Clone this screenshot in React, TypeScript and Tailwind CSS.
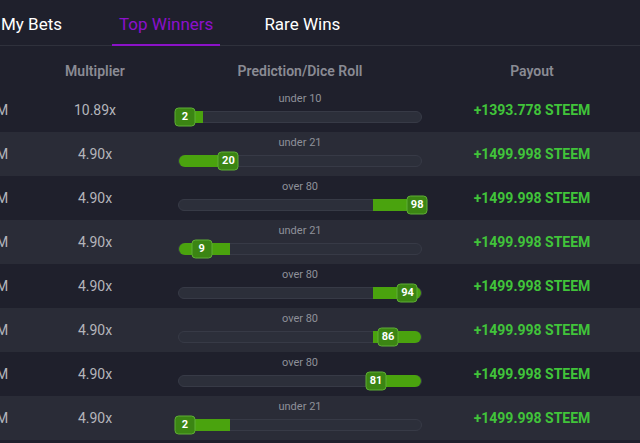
type Bet = {
  multiplier: string;
  mode: "under" | "over";
  target: number;
  roll: number;
  payout: string;
};

const bets: Bet[] = [
  { multiplier: "10.89x", mode: "under", target: 10, roll: 2, payout: "+1393.778 STEEM" },
  { multiplier: "4.90x", mode: "under", target: 21, roll: 20, payout: "+1499.998 STEEM" },
  { multiplier: "4.90x", mode: "over", target: 80, roll: 98, payout: "+1499.998 STEEM" },
  { multiplier: "4.90x", mode: "under", target: 21, roll: 9, payout: "+1499.998 STEEM" },
  { multiplier: "4.90x", mode: "over", target: 80, roll: 94, payout: "+1499.998 STEEM" },
  { multiplier: "4.90x", mode: "over", target: 80, roll: 86, payout: "+1499.998 STEEM" },
  { multiplier: "4.90x", mode: "over", target: 80, roll: 81, payout: "+1499.998 STEEM" },
  { multiplier: "4.90x", mode: "under", target: 21, roll: 2, payout: "+1499.998 STEEM" },
];

const RollBar = ({ bet }: { bet: Bet }) => {
  const fill =
    bet.mode === "under"
      ? { left: 0, width: `${bet.target}%` }
      : { left: `${bet.target}%`, right: 0 };

  return (
    <div className="relative h-[12px] rounded-full border border-[#373a46] bg-[#2c2f3a]">
      <div
        className={`absolute -top-px -bottom-px bg-[#4aa30e] ${
          bet.mode === "under" ? "-left-px rounded-l-full" : "-right-px rounded-r-full"
        }`}
        style={fill}
      />
      <div
        className="absolute top-1/2 flex h-[19px] w-[21px] -translate-x-1/2 -translate-y-1/2 items-center justify-center rounded-[4px] border border-[#5fae36] bg-[#3b8513] text-[11px] font-bold text-white"
        style={{ left: `calc(${bet.roll}% + 1px)` }}
      >
        {bet.roll}
      </div>
    </div>
  );
};

export default function App() {
  return (
    <div className="min-h-screen overflow-hidden bg-[#1f202c] font-['Roboto',sans-serif]">
      <div className="flex h-[46px] items-stretch border-b border-[#2f313c] text-[17px] text-white">
        <div className="-mb-px flex items-center pl-[1px] pt-[4px]">My Bets</div>
        <div className="-mb-px ml-[50px] flex items-center border-b-2 border-[#8b12c8] px-[7px] pt-[6px] text-[#8c10cc]">
          Top Winners
        </div>
        <div className="-mb-px ml-[44px] flex items-center pt-[4px]">Rare Wins</div>
      </div>

      <div className="grid h-[42px] grid-cols-[20px_150px_260px_204px] pt-[17px] text-[14px] font-semibold leading-[16px] text-[#8a8b94]">
        <div />
        <div className="text-center">Multiplier</div>
        <div className="text-center">Prediction/Dice Roll</div>
        <div className="text-center">Payout</div>
      </div>

      {bets.map((bet, i) => (
        <div
          key={i}
          className={`grid h-[44px] grid-cols-[20px_150px_260px_204px] ${
            i % 2 === 1 ? "bg-[#2a2c37]" : "bg-[#1f202c]"
          }`}
        >
          <div className="-ml-[4px] flex items-center text-[14px] text-[#b4b5bb]">M</div>
          <div className="flex items-center justify-center text-[14px] text-[#b4b5bb]">
            {bet.multiplier}
          </div>
          <div className="flex flex-col px-[8px] pt-[5px]">
            <div className="text-center text-[11px] leading-[12px] text-[#8e9099]">
              {bet.mode} {bet.target}
            </div>
            <div className="mt-[6px]">
              <RollBar bet={bet} />
            </div>
          </div>
          <div className="flex items-center justify-center text-[14px] font-bold text-[#41c43a]">
            {bet.payout}
          </div>
        </div>
      ))}
    </div>
  );
}
